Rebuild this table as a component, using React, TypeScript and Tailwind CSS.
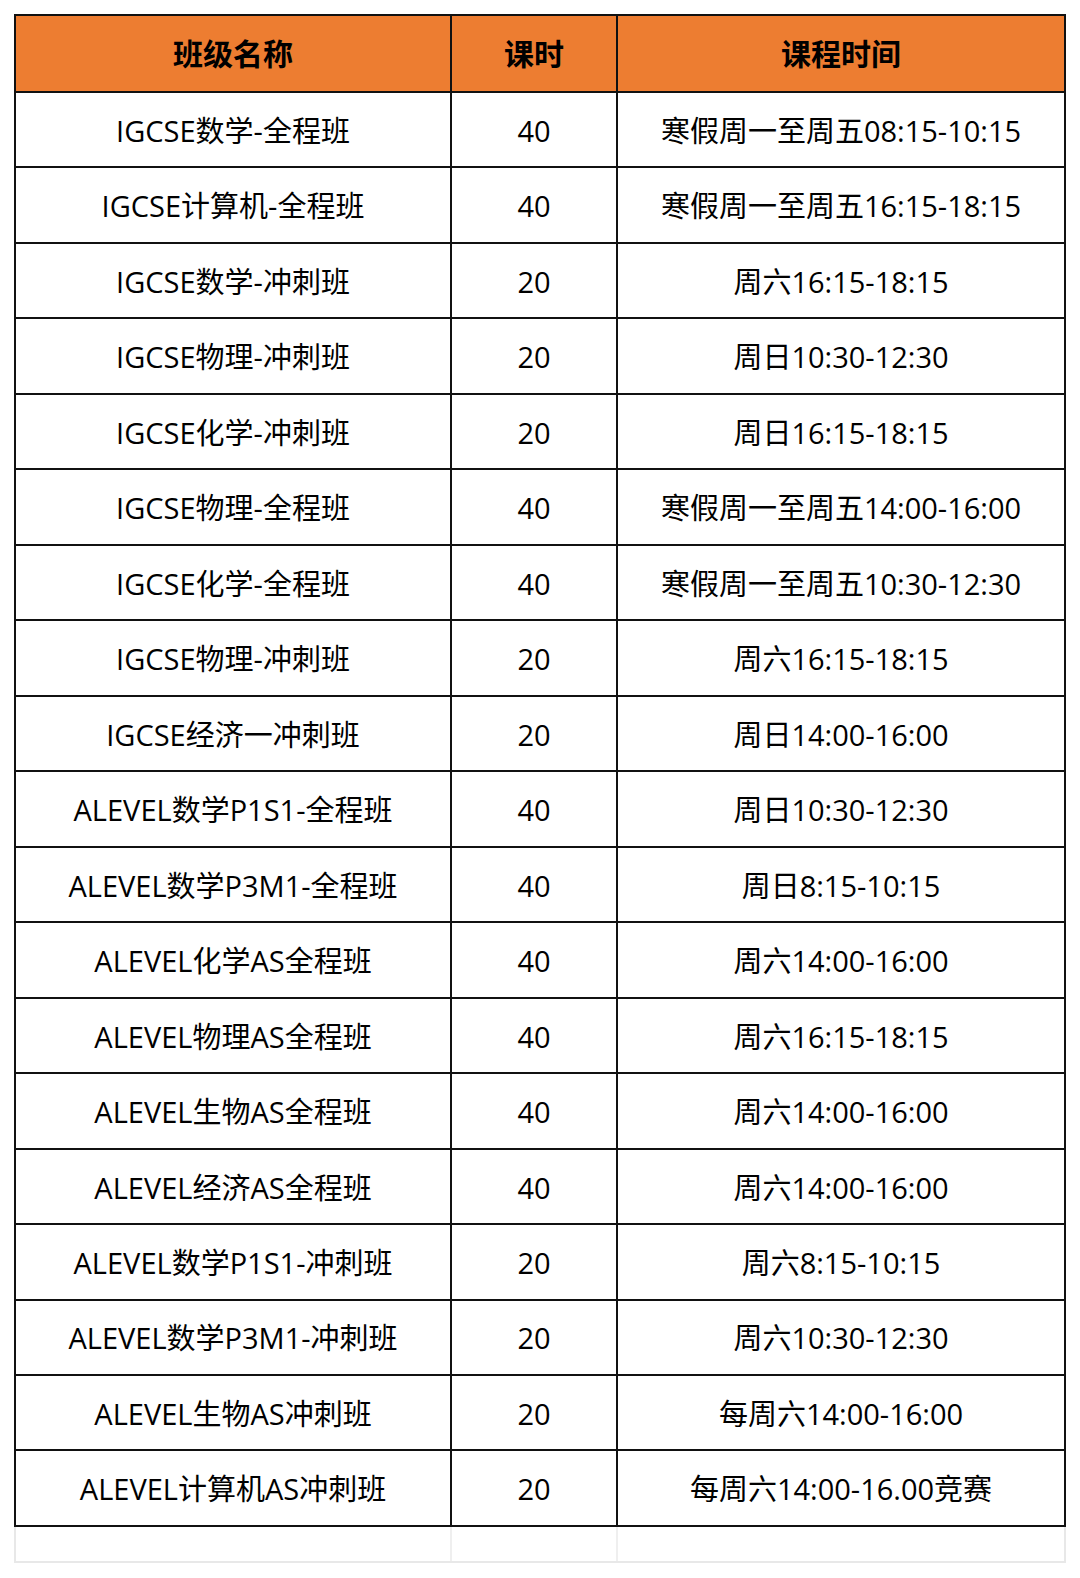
const rows = [
  ["IGCSE数学-全程班", "40", "寒假周一至周五08:15-10:15"],
  ["IGCSE计算机-全程班", "40", "寒假周一至周五16:15-18:15"],
  ["IGCSE数学-冲刺班", "20", "周六16:15-18:15"],
  ["IGCSE物理-冲刺班", "20", "周日10:30-12:30"],
  ["IGCSE化学-冲刺班", "20", "周日16:15-18:15"],
  ["IGCSE物理-全程班", "40", "寒假周一至周五14:00-16:00"],
  ["IGCSE化学-全程班", "40", "寒假周一至周五10:30-12:30"],
  ["IGCSE物理-冲刺班", "20", "周六16:15-18:15"],
  ["IGCSE经济一冲刺班", "20", "周日14:00-16:00"],
  ["ALEVEL数学P1S1-全程班", "40", "周日10:30-12:30"],
  ["ALEVEL数学P3M1-全程班", "40", "周日8:15-10:15"],
  ["ALEVEL化学AS全程班", "40", "周六14:00-16:00"],
  ["ALEVEL物理AS全程班", "40", "周六16:15-18:15"],
  ["ALEVEL生物AS全程班", "40", "周六14:00-16:00"],
  ["ALEVEL经济AS全程班", "40", "周六14:00-16:00"],
  ["ALEVEL数学P1S1-冲刺班", "20", "周六8:15-10:15"],
  ["ALEVEL数学P3M1-冲刺班", "20", "周六10:30-12:30"],
  ["ALEVEL生物AS冲刺班", "20", "每周六14:00-16:00"],
  ["ALEVEL计算机AS冲刺班", "20", "每周六14:00-16.00竞赛"],
];

const font = { fontFamily: '"Open Sans", "Noto Sans CJK SC", sans-serif' };

export default function App() {
  return (
    <div className="w-[1080px] min-h-[1578px] bg-white pt-[14px] pl-[14px]" style={font}>
      <div className="w-[1052px] border-2 border-[#111]">
        {/* header */}
        <div className="grid grid-cols-[436px_166px_446px] h-[75px] bg-[#ED7D31] text-[30px] font-bold text-black">
          <div className="flex items-center justify-center border-r-2 border-[#111]">班级名称</div>
          <div className="flex items-center justify-center border-r-2 border-[#111]">课时</div>
          <div className="flex items-center justify-center">课程时间</div>
        </div>
        {rows.map((r, i) => (
          <div
            key={i}
            className="grid grid-cols-[436px_166px_446px] h-[75.47px] border-t-2 border-[#111] text-[29px] text-black"
          >
            <div className="flex items-center justify-center pt-[2px] border-r-2 border-[#111]">{r[0]}</div>
            <div className="flex items-center justify-center pt-[2px] border-r-2 border-[#111]">{r[1]}</div>
            <div className="flex items-center justify-center pt-[2px]">{r[2]}</div>
          </div>
        ))}
      </div>
      {/* empty trailing row */}
      <div className="w-[1052px] h-[36px] border-x-2 border-b-2 border-[#e8e8e8] grid grid-cols-[436px_166px_446px]">
        <div className="border-r-2 border-[#efefef]" />
        <div className="border-r-2 border-[#efefef]" />
        <div />
      </div>
    </div>
  );
}
